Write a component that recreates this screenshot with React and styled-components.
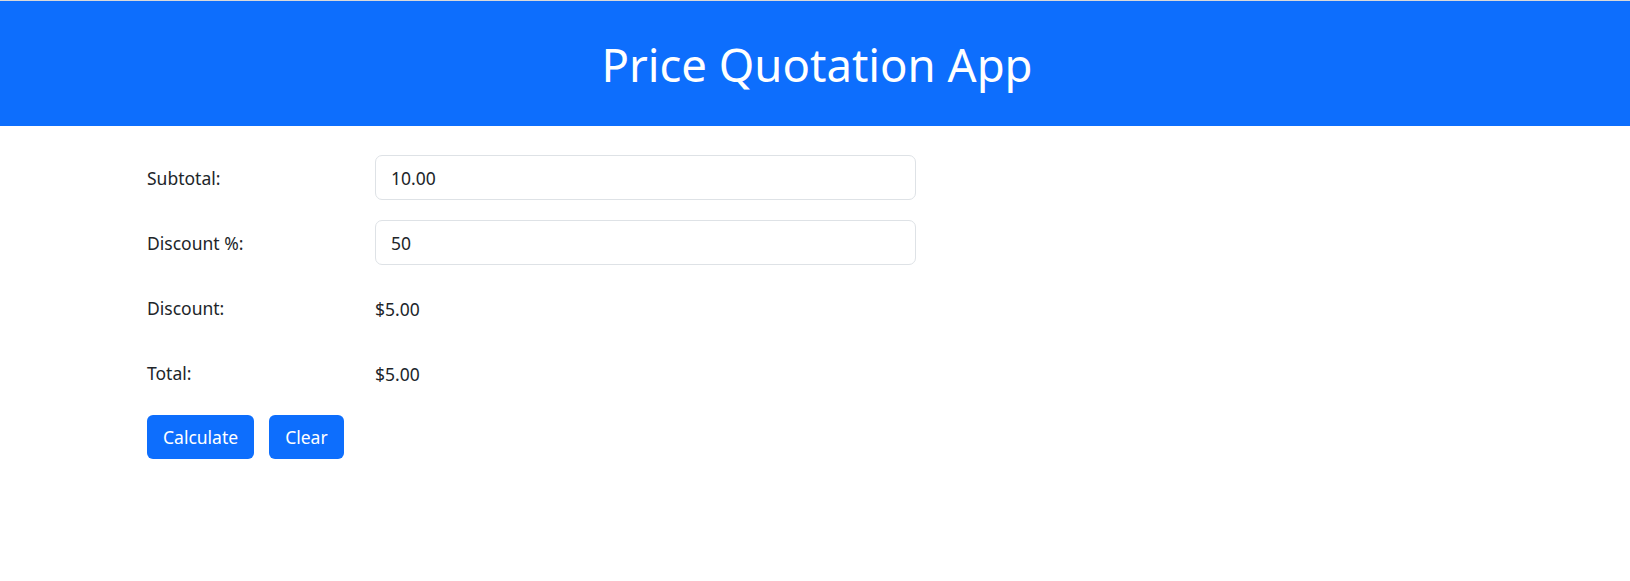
import React, { useState } from "react";
import styled, { createGlobalStyle } from "styled-components";

const GlobalStyle = createGlobalStyle`
  body {
    margin: 0;
    font-family: "Noto Sans", "Open Sans", sans-serif;
    color: #212529;
    background: #fff;
  }
  * {
    box-sizing: border-box;
  }
`;

const Header = styled.header`
  height: 126px;
  border-top: 1px solid #d9d9d9;
  background-color: #0d6efd;
  display: flex;
  justify-content: center;
  align-items: center;
`;

const Title = styled.h1`
  margin: 0 0 0 4px;
  color: #fff;
  font-size: 45.5px;
  font-weight: 400;
`;

const Main = styled.main`
  padding: 29px 147px;
`;

const FieldRow = styled.div`
  display: grid;
  grid-template-columns: 228px 541px;
  align-items: center;
  min-height: 45px;
  margin-bottom: 20px;
`;

const Label = styled.label`
  font-size: 17.5px;
`;

const Input = styled.input`
  height: 45px;
  width: 100%;
  padding: 0 15px;
  font-family: inherit;
  font-size: 17.5px;
  color: #212529;
  border: 1px solid #dee2e6;
  border-radius: 7px;
  outline: none;
`;

const Value = styled.span`
  font-size: 17.5px;
  padding-top: 2px;
`;

const ButtonRow = styled.div`
  display: flex;
  gap: 15px;
`;

const Button = styled.button`
  height: 44px;
  padding: 0 16px;
  font-family: inherit;
  font-size: 17.5px;
  color: #fff;
  background-color: #0d6efd;
  border: none;
  border-radius: 6px;
  cursor: pointer;
`;

const App = () => {
  const [subtotal, setSubtotal] = useState("10.00");
  const [percent, setPercent] = useState("50");
  const [result, setResult] = useState({ discount: 5, total: 5 });

  const calculate = () => {
    const sub = parseFloat(subtotal) || 0;
    const disc = (sub * (parseFloat(percent) || 0)) / 100;
    setResult({ discount: disc, total: sub - disc });
  };

  const clear = () => {
    setSubtotal("");
    setPercent("");
    setResult({ discount: 0, total: 0 });
  };

  return (
    <>
      <GlobalStyle />
      <Header>
        <Title>Price Quotation App</Title>
      </Header>
      <Main>
        <FieldRow>
          <Label>Subtotal:</Label>
          <Input value={subtotal} onChange={(e) => setSubtotal(e.target.value)} />
        </FieldRow>
        <FieldRow>
          <Label>Discount %:</Label>
          <Input value={percent} onChange={(e) => setPercent(e.target.value)} />
        </FieldRow>
        <FieldRow>
          <Label>Discount:</Label>
          <Value>${result.discount.toFixed(2)}</Value>
        </FieldRow>
        <FieldRow>
          <Label>Total:</Label>
          <Value>${result.total.toFixed(2)}</Value>
        </FieldRow>
        <ButtonRow>
          <Button onClick={calculate}>Calculate</Button>
          <Button onClick={clear}>Clear</Button>
        </ButtonRow>
      </Main>
    </>
  );
};

export default App;
